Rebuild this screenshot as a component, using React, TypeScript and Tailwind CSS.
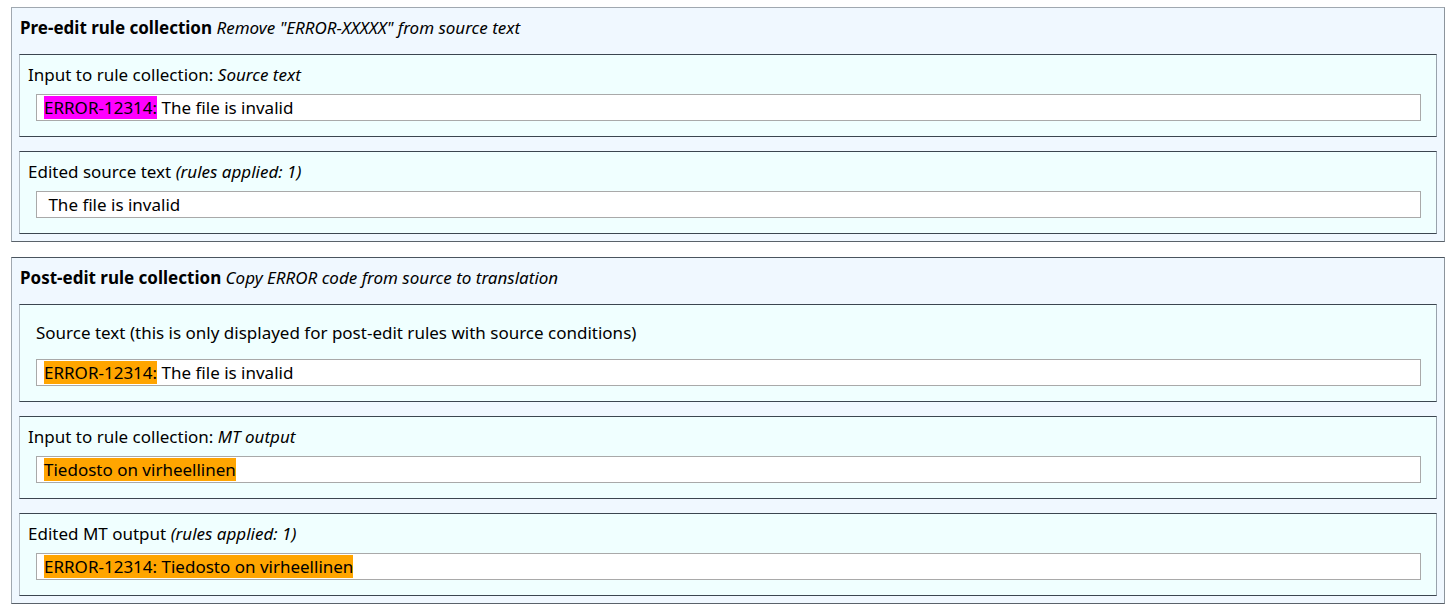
import React from 'react';

type Seg = { text: string; hl?: 'pink' | 'orange' };

const hlClass = {
  pink: 'bg-[#ff00ff]',
  orange: 'bg-[#ffa500]',
};

const TextField: React.FC<{ segs: Seg[] }> = ({ segs }) => (
  <div className="ml-2 mr-[7px] h-[27px] border border-[#a9a9a9] bg-white pl-[7px] leading-[26px] whitespace-pre">
    {segs.map((s, i) => (
      <span key={i} className={s.hl ? hlClass[s.hl] : ''}>
        {s.text}
      </span>
    ))}
  </div>
);

const Box: React.FC<{ label: React.ReactNode; segs: Seg[]; roomy?: boolean }> = ({ label, segs, roomy }) => (
  <div
    className={`border border-t-[#3c4650] border-b-[#3c4650] border-l-[#b4bcc4] border-r-[#98a2ac] bg-[#f0ffff] px-2 ${
      roomy ? 'pt-[17px] pb-[15px]' : 'pt-[9px] pb-[15px]'
    }`}
  >
    <div className={`h-[22px] leading-[22px] ${roomy ? 'pl-2 mb-[15px]' : 'mb-2'}`}>{label}</div>
    <TextField segs={segs} />
  </div>
);

const Panel: React.FC<{ title: string; desc: string; dark?: boolean; children: React.ReactNode }> = ({
  title,
  desc,
  dark,
  children,
}) => (
  <div
    className={`border border-l-[#a0a8b0] border-r-[#8c949c] border-b-[#5a626a] bg-[#f0f8ff] px-[7px] pt-[9px] pb-[7px] ${
      dark ? 'border-t-[#4a545e]' : 'border-t-[#a0a8b0]'
    }`}
  >
    <div className="mb-[15px] h-[22px] pl-px leading-[22px]">
      <b className="font-bold">{title}</b> <i>{desc}</i>
    </div>
    <div className="flex flex-col gap-[14px]">{children}</div>
  </div>
);

export default function App() {
  return (
    <div className="min-h-screen bg-white pl-[11px] pr-[11px] pt-[7px] text-[17px] text-black [font-family:'Noto_Sans',sans-serif]">
      <Panel title="Pre-edit rule collection" desc={'Remove "ERROR-XXXXX" from source text'}>
        <Box
          label={
            <>
              Input to rule collection: <i>Source text</i>
            </>
          }
          segs={[
            { text: 'ERROR', hl: 'pink' },
            { text: '-', hl: 'pink' },
            { text: '12314:', hl: 'pink' },
            { text: ' The file is invalid' },
          ]}
        />
        <Box
          label={
            <>
              Edited source text <i>(rules applied: 1)</i>
            </>
          }
          segs={[{ text: ' The file is invalid' }]}
        />
      </Panel>

      <div className="mt-[15px]">
        <Panel title="Post-edit rule collection" desc="Copy ERROR code from source to translation" dark>
          <Box
            roomy
            label="Source text (this is only displayed for post-edit rules with source conditions)"
            segs={[
              { text: 'ERROR', hl: 'orange' },
              { text: '-', hl: 'orange' },
              { text: '12314:', hl: 'orange' },
              { text: ' The file is invalid' },
            ]}
          />
          <Box
            label={
              <>
                Input to rule collection: <i>MT output</i>
              </>
            }
            segs={[{ text: 'Tiedosto on virheellinen', hl: 'orange' }]}
          />
          <Box
            label={
              <>
                Edited MT output <i>(rules applied: 1)</i>
              </>
            }
            segs={[
              { text: 'ERROR', hl: 'orange' },
              { text: '-', hl: 'orange' },
              { text: '12314: Tiedosto on virheellinen', hl: 'orange' },
            ]}
          />
        </Panel>
      </div>
    </div>
  );
}
